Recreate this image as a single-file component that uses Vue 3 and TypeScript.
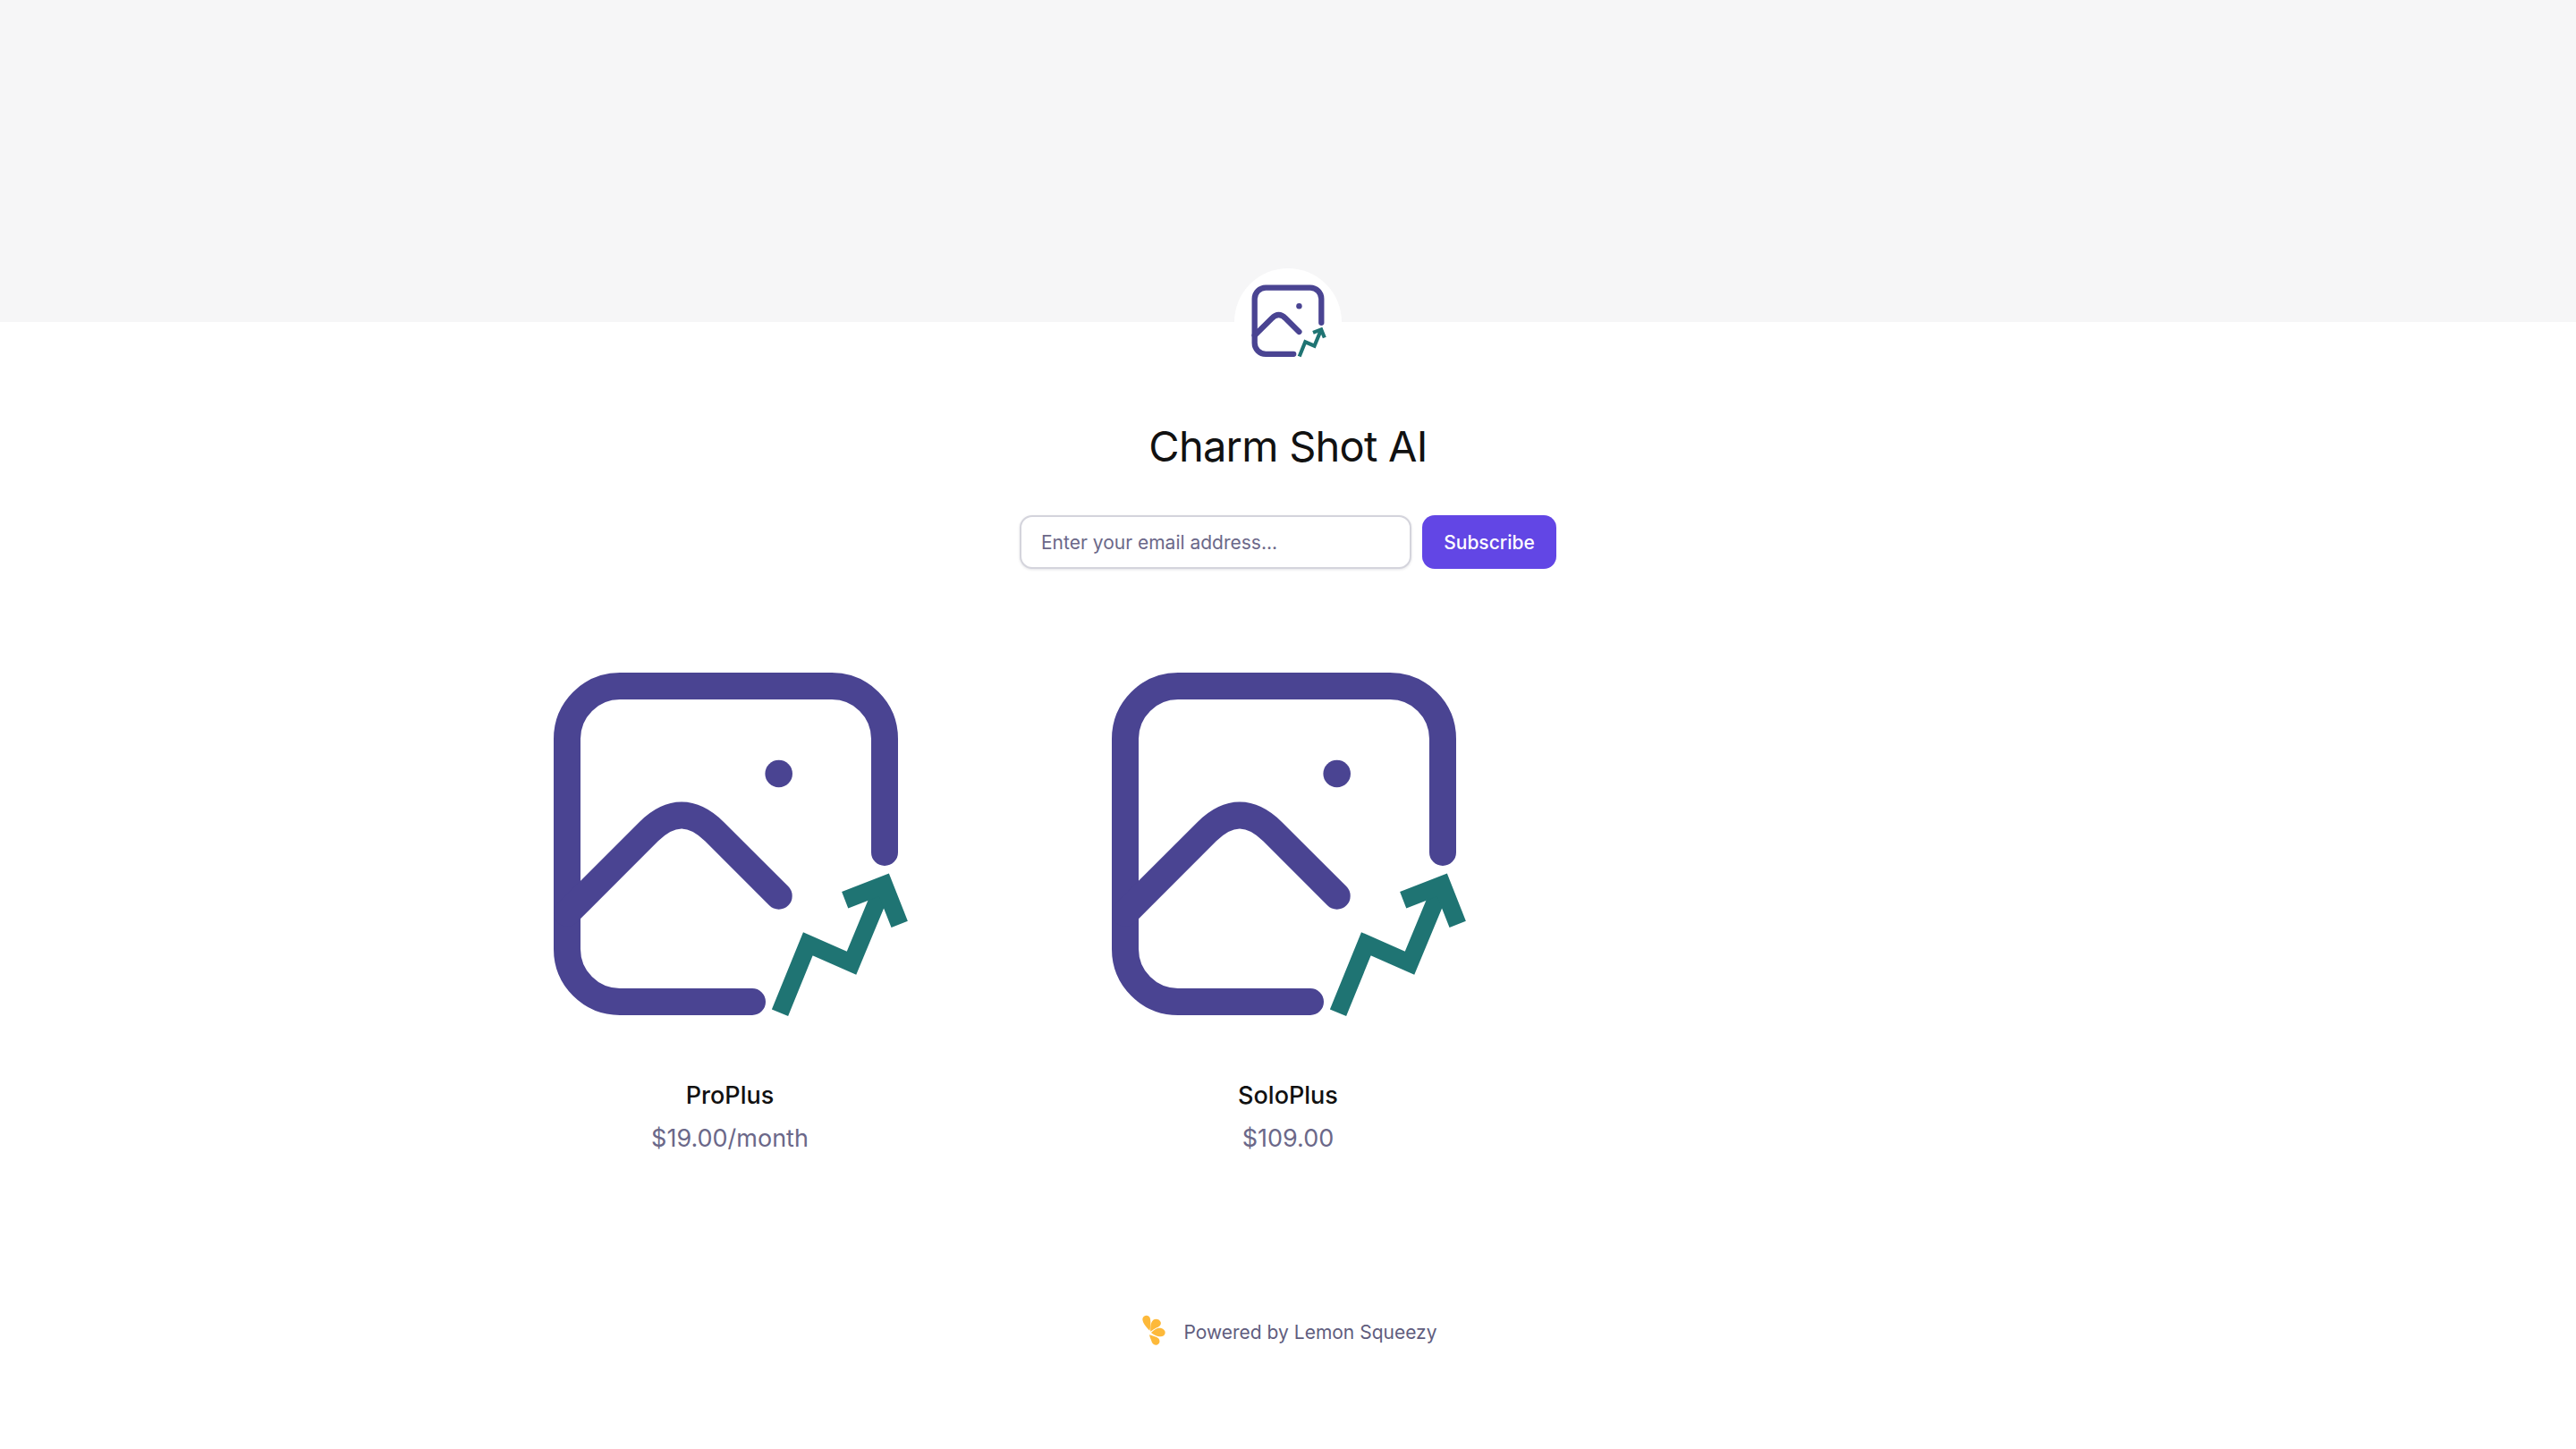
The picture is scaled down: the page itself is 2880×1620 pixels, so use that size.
<template>
  <div class="store-page">
    <div class="store-banner"></div>

    <div class="store-logo">
      <svg viewBox="-74 -66 571 571" width="120" height="120" aria-label="Charm Shot AI">
        <defs>
          <symbol id="charm-icon" overflow="visible" viewBox="0 0 440 420">
            <g fill="none" stroke="#4a4492" stroke-width="30" stroke-linecap="round">
              <path d="M389 223V96a59 59 0 0 0-59-59H93a59 59 0 0 0-59 59V331a59 59 0 0 0 59 59H241" />
              <path d="M34 291L125 200Q162 163 199 200L270.7 271.7" />
            </g>
            <circle cx="270.7" cy="135" r="15.3" fill="#4a4492" />
            <g fill="none" stroke="#1f7473" stroke-width="19.7" stroke-miterlimit="10">
              <path d="M272 402.3L303.3 325.3L352 346.7L388.3 259.3" />
              <path d="M344.7 276.3L388.3 259.3L405.7 303.3" />
            </g>
          </symbol>
        </defs>
        <use href="#charm-icon" x="0" y="0" width="440" height="420" />
      </svg>
    </div>

    <h1 class="store-title">Charm Shot AI</h1>

    <form class="subscribe-form" @submit.prevent>
      <input class="subscribe-input" type="email" placeholder="Enter your email address..." />
      <button class="subscribe-btn" type="submit">Subscribe</button>
    </form>

    <div class="product-grid">
      <div v-for="item in products" :key="item.name" class="product-card">
        <svg class="product-image" viewBox="-72 -58 576 520" width="576" height="520">
          <use href="#charm-icon" x="0" y="0" width="440" height="420" />
        </svg>
        <div class="product-name">{{ item.name }}</div>
        <div class="product-price">{{ item.price }}</div>
      </div>
    </div>

    <div class="store-footer">
      <svg viewBox="33 21 90 135" width="30" height="45" fill="#fdb93a">
        <path d="M40 46a13 13 0 0 1 26-2C68 56 67 70 64 83C53 72 42 60 40 46Z" />
        <path d="M76 47C84 41 97 44 101 54C104 65 95 70 88 73C81 77 74 81 67 86C66 72 67 55 76 47Z" />
        <path d="M69 90C76 82 86 74 97 74C109 74 116 82 116 89C116 98 107 104 96 103C87 102 76 96 69 90Z" />
        <path d="M63 97C72 100 87 103 95 110C100 119 97 129 86 131C75 132 71 122 69 115C66 109 64 103 63 97Z" />
      </svg>
      <span>Powered by Lemon Squeezy</span>
    </div>
  </div>
</template>

<script setup lang="ts">
interface Product {
  name: string;
  price: string;
}

const products: Product[] = [
  { name: "ProPlus", price: "$19.00/month" },
  { name: "SoloPlus", price: "$109.00" },
];
</script>

<style>
body {
  background: #fff;
}
</style>

<style scoped>
.store-page {
  min-height: 1620px;
  display: flex;
  flex-direction: column;
  align-items: center;
  font-family: Inter, "Liberation Sans", sans-serif;
  color: #111;
}

.store-banner {
  width: 100%;
  height: 360px;
  background: #f6f6f7;
}

.store-logo {
  width: 120px;
  height: 120px;
  margin-top: -60px;
  border-radius: 50%;
  background: #fff;
  overflow: hidden;
}

.store-logo svg {
  display: block;
}

.store-title {
  margin: 51px 0 0;
  font-size: 47px;
  line-height: 56px;
  font-weight: 400;
  letter-spacing: -0.75px;
}

.subscribe-form {
  display: flex;
  gap: 12px;
  width: 600px;
  margin-top: 49px;
}

.subscribe-input {
  flex: 1;
  min-width: 0;
  height: 60px;
  box-sizing: border-box;
  padding: 0 22px;
  border: 2px solid #d4d4dc;
  border-radius: 14px;
  background: #fff;
  box-shadow: 0 1px 3px rgba(30, 30, 60, 0.12);
  font: 400 21px Inter, "Liberation Sans", sans-serif;
  color: #111;
  outline: none;
}

.subscribe-input::placeholder {
  color: #6b6889;
  opacity: 1;
}

.subscribe-btn {
  width: 150px;
  height: 60px;
  padding: 0;
  border: none;
  border-radius: 14px;
  background: #6246e5;
  color: #fff;
  font: 500 21px Inter, "Liberation Sans", sans-serif;
  cursor: pointer;
}

.product-grid {
  display: grid;
  grid-template-columns: repeat(3, 576px);
  gap: 48px;
  margin-top: 36px;
}

.product-card {
  display: flex;
  flex-direction: column;
  align-items: center;
}

.product-image {
  display: block;
}

.product-name {
  margin-top: 13px;
  font-size: 27px;
  line-height: 40px;
  font-weight: 500;
}

.product-price {
  margin-top: 8px;
  font-size: 27px;
  line-height: 40px;
  color: #6b6889;
}

.store-footer {
  display: flex;
  align-items: center;
  gap: 18px;
  margin-top: 174px;
  padding-left: 2px;
  font-size: 21px;
  color: #5f5d7e;
}

.store-footer svg {
  display: block;
}
</style>
